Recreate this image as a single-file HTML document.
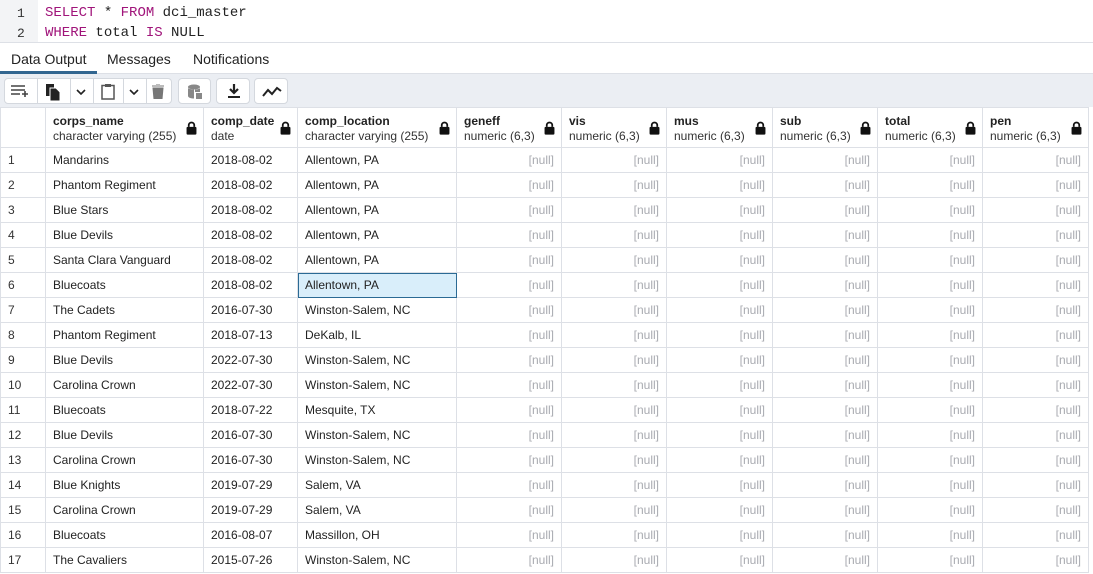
<!DOCTYPE html><html><head><style>
*{box-sizing:border-box;margin:0;padding:0}
body{width:1093px;height:574px;overflow:hidden;background:#fff;font-family:"Liberation Sans",sans-serif;position:relative}
.ed{position:absolute;left:0;top:0;width:1093px;height:42px;background:#fff}
.gut{position:absolute;left:0;top:0;width:38px;height:42px;background:#f3f4f6}
.ln{position:absolute;left:17px;font:13px "Liberation Mono",monospace;color:#333}
.code{position:absolute;left:45px;font:14px "Liberation Mono",monospace;color:#222;white-space:pre}
.k{color:#a0147a}
.tabs{position:absolute;top:42px;left:0;width:1093px;height:32px;background:#fff;border-top:1px solid #dde0e6;border-bottom:1px solid #dde0e6}
.tab{position:absolute;top:8px;font-size:14px;color:#222}
.ul{position:absolute;left:0;top:28px;width:97px;height:3px;background:#326690}
.tb{position:absolute;top:74px;left:0;width:1093px;height:33px;background:#ebeef3}
.btn{position:absolute;top:4px;height:26px;background:#fff;border:1px solid #d4d8de;border-radius:4px}
.sep{position:absolute;top:0;width:1px;height:24px;background:#d4d8de}
table{position:absolute;top:107px;left:0;border-collapse:collapse;table-layout:fixed;font-size:12px;color:#222}
td,th{border:1px solid #dde0e6;height:25px;padding:0 7px;white-space:nowrap;overflow:hidden}
th{height:40px;text-align:left;font-weight:normal;position:relative;vertical-align:top;padding-top:6px;line-height:15px}
th b{font-weight:bold;color:#222}
th span{color:#333}
.lk{position:absolute;right:6px;top:13px;width:11px;height:14px}
td.n{text-align:right;color:#a8aab0}
td.r{color:#333}
.sel{background:#d9eefa;outline:1px solid #2b6a94;outline-offset:-1px}
</style></head><body>
<div class="ed"><div class="gut"></div>
<div class="ln" style="top:6px">1</div><div class="ln" style="top:26px">2</div>
<div class="code" style="top:5px"><span class="k">SELECT</span> * <span class="k">FROM</span> dci_master</div>
<div class="code" style="top:25px"><span class="k">WHERE</span> total <span class="k">IS</span> NULL</div></div>
<div class="tabs"><div class="tab" style="left:11px">Data Output</div><div class="tab" style="left:107px">Messages</div><div class="tab" style="left:193px">Notifications</div><div class="ul"></div></div>
<div class="tb">
<div class="btn" style="left:4px;width:168px">
<svg style="position:absolute;left:5px;top:5px" width="22" height="14" viewBox="0 0 22 14"><path d="M1 2h14M1 6h14M1 10h9M15 7v6M12 10h6" stroke="#444" stroke-width="1.6" fill="none"/></svg>
<div class="sep" style="left:32px"></div>
<svg style="position:absolute;left:40px;top:4px" width="16" height="18" viewBox="0 0 16 18"><path d="M1 1h8v12H1z" fill="#222"/><path d="M5 5h6l4 4v9H5z" fill="#222" stroke="#fff" stroke-width="1"/></svg>
<div class="sep" style="left:65px"></div>
<svg style="position:absolute;left:71px;top:10px" width="10" height="6" viewBox="0 0 10 6"><path d="M1 1l4 4 4-4" stroke="#222" stroke-width="1.6" fill="none"/></svg>
<div class="sep" style="left:88px"></div>
<svg style="position:absolute;left:96px;top:4px" width="14" height="17" viewBox="0 0 14 17"><rect x="1" y="2.5" width="12" height="13.5" fill="none" stroke="#555" stroke-width="1.5"/><rect x="4" y="1" width="6" height="3" fill="#555"/></svg>
<div class="sep" style="left:118px"></div>
<svg style="position:absolute;left:124px;top:10px" width="10" height="6" viewBox="0 0 10 6"><path d="M1 1l4 4 4-4" stroke="#222" stroke-width="1.6" fill="none"/></svg>
<div class="sep" style="left:141px"></div>
<svg style="position:absolute;left:147px;top:5px" width="12" height="15" viewBox="0 0 12 15"><path d="M0 2h12M4 0h4M1 4h10l-1 11H2z" stroke="#777" fill="#777"/></svg>
</div>
<div class="btn" style="left:178px;width:33px"><svg style="position:absolute;left:9px;top:5px" width="14" height="15" viewBox="0 0 14 15"><ellipse cx="6" cy="3" rx="6" ry="2.5" fill="#888"/><path d="M0 4v8c0 1.5 3 2.5 6 2.5V5.5C3 5.5 0 4.5 0 4zM12 4v4H7V5.5c3 0 5-1 5-1.5z" fill="#888"/><rect x="8" y="9" width="6" height="6" fill="#888"/></svg></div>
<div class="btn" style="left:216px;width:34px"><svg style="position:absolute;left:10px;top:5px" width="14" height="15" viewBox="0 0 14 15"><path d="M7 0v8M3 5l4 4 4-4" stroke="#222" stroke-width="2.2" fill="none"/><path d="M1 13h12" stroke="#222" stroke-width="2"/></svg></div>
<div class="btn" style="left:254px;width:34px"><svg style="position:absolute;left:7px;top:7px" width="20" height="12" viewBox="0 0 20 12"><path d="M1 10l5-6 4 4 5-6 4 3" stroke="#222" stroke-width="2" fill="none"/></svg></div>
</div>
<table>
<colgroup><col style="width:45px"><col style="width:158px"><col style="width:94px"><col style="width:159px"><col style="width:105px"><col style="width:105px"><col style="width:106px"><col style="width:105px"><col style="width:105px"><col style="width:106px"></colgroup>
<tr><th></th>
<th><b>corps_name</b><br><span>character varying (255)</span><svg class="lk" viewBox="0 0 10 12"><path d="M2.5 5V3.5a2.5 2.5 0 0 1 5 0V5" stroke="#111" stroke-width="1.6" fill="none"/><rect x="0.5" y="5" width="9" height="7" rx="1" fill="#111"/></svg></th>
<th><b>comp_date</b><br><span>date</span><svg class="lk" viewBox="0 0 10 12"><path d="M2.5 5V3.5a2.5 2.5 0 0 1 5 0V5" stroke="#111" stroke-width="1.6" fill="none"/><rect x="0.5" y="5" width="9" height="7" rx="1" fill="#111"/></svg></th>
<th><b>comp_location</b><br><span>character varying (255)</span><svg class="lk" viewBox="0 0 10 12"><path d="M2.5 5V3.5a2.5 2.5 0 0 1 5 0V5" stroke="#111" stroke-width="1.6" fill="none"/><rect x="0.5" y="5" width="9" height="7" rx="1" fill="#111"/></svg></th>
<th><b>geneff</b><br><span>numeric (6,3)</span><svg class="lk" viewBox="0 0 10 12"><path d="M2.5 5V3.5a2.5 2.5 0 0 1 5 0V5" stroke="#111" stroke-width="1.6" fill="none"/><rect x="0.5" y="5" width="9" height="7" rx="1" fill="#111"/></svg></th>
<th><b>vis</b><br><span>numeric (6,3)</span><svg class="lk" viewBox="0 0 10 12"><path d="M2.5 5V3.5a2.5 2.5 0 0 1 5 0V5" stroke="#111" stroke-width="1.6" fill="none"/><rect x="0.5" y="5" width="9" height="7" rx="1" fill="#111"/></svg></th>
<th><b>mus</b><br><span>numeric (6,3)</span><svg class="lk" viewBox="0 0 10 12"><path d="M2.5 5V3.5a2.5 2.5 0 0 1 5 0V5" stroke="#111" stroke-width="1.6" fill="none"/><rect x="0.5" y="5" width="9" height="7" rx="1" fill="#111"/></svg></th>
<th><b>sub</b><br><span>numeric (6,3)</span><svg class="lk" viewBox="0 0 10 12"><path d="M2.5 5V3.5a2.5 2.5 0 0 1 5 0V5" stroke="#111" stroke-width="1.6" fill="none"/><rect x="0.5" y="5" width="9" height="7" rx="1" fill="#111"/></svg></th>
<th><b>total</b><br><span>numeric (6,3)</span><svg class="lk" viewBox="0 0 10 12"><path d="M2.5 5V3.5a2.5 2.5 0 0 1 5 0V5" stroke="#111" stroke-width="1.6" fill="none"/><rect x="0.5" y="5" width="9" height="7" rx="1" fill="#111"/></svg></th>
<th><b>pen</b><br><span>numeric (6,3)</span><svg class="lk" viewBox="0 0 10 12"><path d="M2.5 5V3.5a2.5 2.5 0 0 1 5 0V5" stroke="#111" stroke-width="1.6" fill="none"/><rect x="0.5" y="5" width="9" height="7" rx="1" fill="#111"/></svg></th></tr>
<tbody id="b"></tbody>
</table>
<script>
var d=[["Mandarins","2018-08-02","Allentown, PA"],["Phantom Regiment","2018-08-02","Allentown, PA"],["Blue Stars","2018-08-02","Allentown, PA"],["Blue Devils","2018-08-02","Allentown, PA"],["Santa Clara Vanguard","2018-08-02","Allentown, PA"],["Bluecoats","2018-08-02","Allentown, PA"],["The Cadets","2016-07-30","Winston-Salem, NC"],["Phantom Regiment","2018-07-13","DeKalb, IL"],["Blue Devils","2022-07-30","Winston-Salem, NC"],["Carolina Crown","2022-07-30","Winston-Salem, NC"],["Bluecoats","2018-07-22","Mesquite, TX"],["Blue Devils","2016-07-30","Winston-Salem, NC"],["Carolina Crown","2016-07-30","Winston-Salem, NC"],["Blue Knights","2019-07-29","Salem, VA"],["Carolina Crown","2019-07-29","Salem, VA"],["Bluecoats","2016-08-07","Massillon, OH"],["The Cavaliers","2015-07-26","Winston-Salem, NC"]];
var h="";d.forEach(function(r,i){h+='<tr><td class="r">'+(i+1)+'</td><td>'+r[0]+'</td><td>'+r[1]+'</td><td'+(i==5?' class="sel"':'')+'>'+r[2]+'</td>';for(var j=0;j<6;j++)h+='<td class="n">[null]</td>';h+='</tr>';});
document.getElementById('b').innerHTML=h;
</script>
</body></html>
